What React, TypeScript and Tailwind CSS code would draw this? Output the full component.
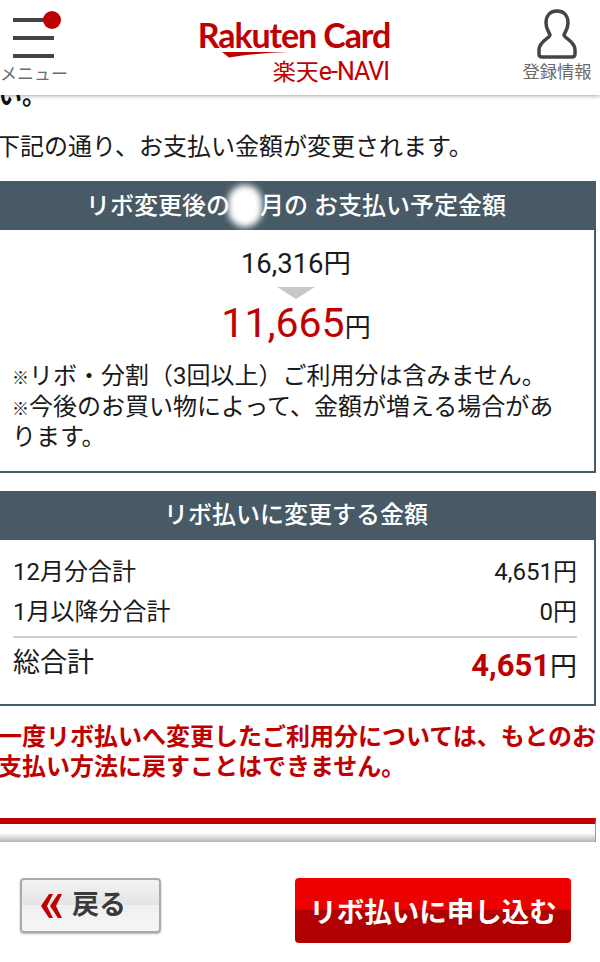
import React from "react";

const font = { fontFamily: 'Roboto, "Noto Sans CJK JP", sans-serif' };

function Menu() {
  return (
    <div className="relative flex w-[68px] flex-col items-start">
      <div className="relative ml-[13px] mt-[18px] flex w-[41px] flex-col gap-[14px]">
        <div className="h-[4px] w-full bg-[#444444]" />
        <div className="h-[4px] w-full bg-[#444444]" />
        <div className="h-[4px] w-full bg-[#444444]" />
        <div className="absolute left-[30px] top-[-7px] h-[18px] w-[18px] rounded-full bg-[#bf0000]" />
      </div>
      <div className="mt-[6px] whitespace-nowrap text-[17px] leading-[20px] text-[#6a6a6a]">メニュー</div>
    </div>
  );
}

function Logo() {
  return (
    <div className="relative -ml-[2px] flex w-[194px] flex-col items-end pt-[16px] text-[#bf0000]">
      <div className="w-[194px] whitespace-nowrap text-center text-[34px] font-bold leading-[38px] tracking-[-1.1px]" style={{ fontFamily: 'Lato, sans-serif' }}>
        Rakuten Card
      </div>
      <svg className="absolute left-[25px] top-[51px]" width="68" height="7" viewBox="0 0 68 7">
        <path d="M0 1 L67 1 Q35 2 7 6.5 Z" fill="#bf0000" />
      </svg>
      <div className="mr-[2px] mt-[5px] whitespace-nowrap leading-[26px]">
        <span className="text-[23px]">楽天</span>
        <span className="text-[25px] tracking-[-1px]">e-NAVI</span>
      </div>
    </div>
  );
}

function User() {
  return (
    <div className="flex w-[70px] flex-col items-center pt-[9px]">
      <svg width="42" height="50" viewBox="0 0 42 50" fill="none">
        <path
          d="M21 2 C13 2 10 8 10 14 C10 20 13 23 14 26 C14 29 3 32 3 41 V45 C3 47 4 48 6 48 H36 C38 48 39 47 39 45 V41 C39 32 28 29 28 26 C29 23 32 20 32 14 C32 8 29 2 21 2 Z"
          stroke="#444444"
          strokeWidth="3.5"
          strokeLinejoin="round"
        />
      </svg>
      <div className="mt-[3px] whitespace-nowrap text-[17.25px] leading-[20px] text-[#6a6a6a]">登録情報</div>
    </div>
  );
}

function Box({ title, children }: { title: React.ReactNode; children: React.ReactNode }) {
  return (
    <section className="-ml-[2px] mr-[4px] border-b-2 border-r-2 border-[#475a66]">
      <h2 className="relative flex h-[49px] items-center justify-center bg-[#475a66] text-[24px] font-medium leading-[30px] text-white">
        {title}
      </h2>
      {children}
    </section>
  );
}

function Row({ label, value }: { label: string; value: string }) {
  return (
    <div className="flex items-center justify-between text-[24px] leading-[40px] text-[#1a1a1a]">
      <span>{label}</span>
      <span>{value}円</span>
    </div>
  );
}

export default function App() {
  return (
    <div className="flex h-[962px] w-[600px] flex-col overflow-hidden bg-white" style={font}>
      <header className="relative z-10 flex h-[95px] shrink-0 justify-between bg-white pr-[8px] shadow-[0_1px_4px_rgba(0,0,0,0.35)]">
        <Menu />
        <Logo />
        <User />
      </header>

      <main className="h-[748px] shrink-0 overflow-hidden">
        <p className="-mt-[11px] -ml-[2px] text-[24px] font-bold leading-[24px] text-[#111111]">い。</p>
        <p className="-ml-[4px] mt-[21px] whitespace-nowrap text-[24px] leading-[36px] text-[#1a1a1a]">
          下記の通り、お支払い金額が変更されます。
        </p>

        <div className="mt-[16px]">
          <Box
            title={
              <>
                <span>リボ変更後の</span>
                <span className="relative inline-block h-[30px] w-[30px]">
                  <span className="absolute left-[-2px] top-[-6px] h-[42px] w-[34px] rounded-full bg-white blur-[3px]" />
                </span>
                <span>月の お支払い予定金額</span>
              </>
            }
          >
            <div className="flex flex-col pb-[18px]">
              <div className="mt-[16px] text-center text-[27.5px] leading-[36px] text-[#1a1a1a]">16,316円</div>
              <div className="mx-auto mt-[5px] h-0 w-0 border-x-[19px] border-t-[12px] border-x-transparent border-t-[#c8c8c8]" />
              <div className="-mt-[2px] flex items-baseline justify-center">
                <span className="text-[41px] leading-[52px] text-[#bf0000]">11,665</span>
                <span className="text-[26px] leading-[36px] text-[#1a1a1a]">円</span>
              </div>
              <div className="mt-[12px] pl-[14px] pr-[30px] text-[24px] leading-[30.5px] text-[#1a1a1a]">
                <div className="whitespace-nowrap">
                  <span className="text-[17px] font-medium leading-none">※</span>リボ・分割（3回以上）ご利用分は含みません。
                </div>
                <div>
                  <span className="text-[17px] font-medium leading-none">※</span>今後のお買い物によって、金額が増える場合があります。
                </div>
              </div>
            </div>
          </Box>
        </div>

        <div className="mt-[18px]">
          <Box title="リボ払いに変更する金額">
            <div className="pb-[12px] pl-[15px] pr-[17px] pt-[12px]">
              <Row label="12月分合計" value="4,651" />
              <Row label="1月以降分合計" value="0" />
              <div className="mt-[4px] flex items-start justify-between border-t-2 border-[#d0d0d0] text-[#1a1a1a]">
                <span className="text-[27px] leading-[50px]">総合計</span>
                <span className="mt-[3px] flex items-baseline">
                  <b className="text-[31px] font-bold leading-[50px] text-[#bf0000]">4,651</b>
                  <span className="text-[27px] leading-[50px]">円</span>
                </span>
              </div>
            </div>
          </Box>
        </div>

        <p className="-ml-[2px] mr-[2px] mt-[16px] text-[24px] font-bold leading-[30px] text-[#bf0000]">
          一度リボ払いへ変更したご利用分については、もとのお支払い方法に戻すことはできません。
        </p>

        <div className="-ml-[2px] mr-[4px] mt-[36px] h-[24px] border-t-[6px] border-r border-t-[#bf0000] border-r-[#999999] bg-gradient-to-b from-white via-white to-[#b4b4b4]" />
      </main>

      <footer className="flex flex-1 items-start justify-between bg-white pl-[20px] pr-[29px] pt-[35px]">
        <button className="flex h-[55px] w-[141px] items-center justify-center gap-[10px] rounded-[4px] border-2 border-[#aaaaaa] bg-[linear-gradient(to_bottom,#f2f2f2_0%,#e4e4e4_50%,#f0f0f0_50%,#f6f6f6_100%)] pr-[14px] text-[27px] font-bold text-[#3a3a3a] shadow-[0_1px_2px_rgba(0,0,0,0.3)]">
          <svg width="21" height="24" viewBox="0 0 21 24">
            <path d="M8 0 H12 L6 12 L12 24 H8 L0 12 Z M17 0 H21 L15 12 L21 24 H17 L9 12 Z" fill="#bf0000" />
          </svg>
          戻る
        </button>
        <button className="flex h-[65px] w-[276px] items-center justify-center rounded-[4px] bg-[linear-gradient(to_bottom,#ee0000_0%,#ee0000_50%,#b00000_50%,#b00000_100%)] pt-[5px] text-[27.5px] font-bold text-white">
          リボ払いに申し込む
        </button>
      </footer>
    </div>
  );
}
